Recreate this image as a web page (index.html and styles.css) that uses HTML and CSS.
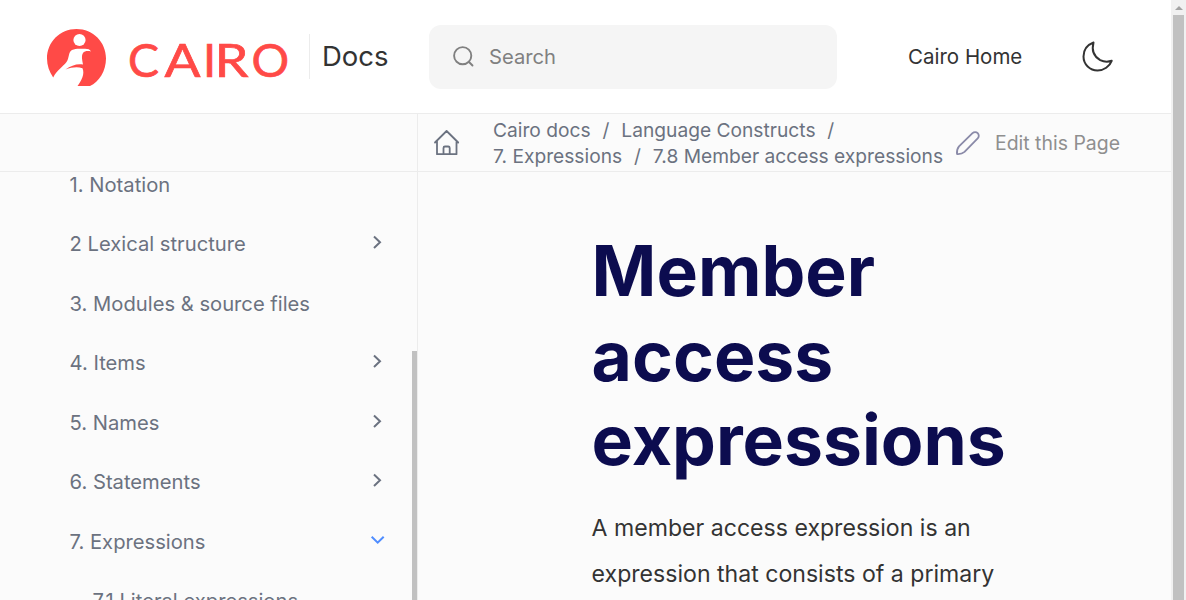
FILE: index.html
```html
<!DOCTYPE html>
<html lang="en">
<head>
<meta charset="utf-8">
<title>7.8 Member access expressions - Cairo Docs</title>
<link rel="stylesheet" href="styles.css">
</head>
<body>
<div class="page">
  <header class="header">
    <a class="brand">
      <svg class="logo" width="244" height="60" viewBox="0 0 244 60" role="img" aria-label="Cairo">
        <path fill="#ff4a47" d="M30.500 1C14 1 1 14 1 30.500c0 7 2.300 13 6.200 19C11 42 17 38.500 20.500 34c3-4 1.500-9.500 5.500-12 4-2 9-1 13-1.300 3 0 5 .7 6 2.800-3-.8-6.500-.5-8 1.500-2 3-.5 8 0 11.500-6-1-12 1-17.500 5 6-2.200 12-2.800 17-1.300 2.500 6-1 12.300-5 17.800H44C53 54 60 43 60 30.500 60 14 47 1 30.500 1Z"/>
        <circle cx="33.500" cy="12" r="6.100" fill="#fff"/>
        <text class="wordmark" x="82" y="48.500" textLength="31" lengthAdjust="spacingAndGlyphs">C</text>
        <text class="wordmark" x="118.500" y="48.500" textLength="36" lengthAdjust="spacingAndGlyphs">A</text>
        <text class="wordmark" x="157" y="48.500">I</text>
        <text class="wordmark" x="168.500" y="48.500" textLength="34" lengthAdjust="spacingAndGlyphs">R</text>
        <text class="wordmark" x="205.500" y="48.500">O</text>
      </svg>
      <span class="product">Docs</span>
    </a>
    <div class="search">
      <svg width="24" height="24" viewBox="0 0 24 24" fill="none" stroke="#808080" stroke-width="1.900" stroke-linecap="round"><circle cx="10.700" cy="10.700" r="8.600"/><path d="m17 17 3.500 3.500"/></svg>
      <span>Search</span>
    </div>
    <a class="home-link">Cairo Home</a>
    <svg class="moon" width="32" height="32" viewBox="0 0 32 32" fill="none" stroke="#333" stroke-width="2" stroke-linejoin="round"><path d="M11.500 1.500C5 4 1.500 9.500 1.500 15.500c0 8 6.500 14 14 14 6.500 0 12-4 14.200-9.700-3.500 1.200-8 1-11.500-.7C12 15.500 9.500 9 11.500 1.500Z"/></svg>
  </header>
  <div class="toolbar">
    <div class="toolbar-side"></div>
    <svg class="house" width="28" height="28" viewBox="0 0 28 28" fill="none" stroke="#6b7280" stroke-width="1.800" stroke-linecap="round" stroke-linejoin="round"><path d="M2 13.500 13.600 2l11.600 11.500M4 12v13.200h19.500V12M10.500 25v-6q0-1.500 1.500-1.500h3.200q1.500 0 1.500 1.500v6"/></svg>
    <nav class="crumbs">
      <div><a>Cairo docs</a><i>/</i><a>Language Constructs</a><i>/</i></div>
      <div><a>7. Expressions</a><i>/</i><a>7.8 Member access expressions</a></div>
    </nav>
    <a class="edit">
      <svg width="26" height="26" viewBox="0 0 26 26" fill="none" stroke="#8a8aa8" stroke-width="1.800" stroke-linejoin="round"><path d="M2 24c-.3-3 0-5.300 2-7.700L17.500 3.200c1.500-1.400 3.800-1.400 5.200 0s1.500 3.700 0 5.200L9.500 21.800C7.300 23.800 5 24.200 2 24Z"/></svg>
      <span>Edit this Page</span>
    </a>
  </div>
  <div class="body">
    <aside class="sidebar">
      <ul class="nav">
        <li>1. Notation</li>
        <li>2 Lexical structure<svg class="chev" viewBox="0 0 16 16"><path d="m4 2.500 6 5.700-6 5.700"/></svg></li>
        <li>3. Modules &amp; source files</li>
        <li>4. Items<svg class="chev" viewBox="0 0 16 16"><path d="m4 2.500 6 5.700-6 5.700"/></svg></li>
        <li>5. Names<svg class="chev" viewBox="0 0 16 16"><path d="m4 2.500 6 5.700-6 5.700"/></svg></li>
        <li>6. Statements<svg class="chev" viewBox="0 0 16 16"><path d="m4 2.500 6 5.700-6 5.700"/></svg></li>
        <li>7. Expressions<svg class="chev open" viewBox="0 0 16 16"><path d="m1.700 4.700 6 6 6-6"/></svg></li>
        <li class="child">7.1 Literal expressions</li>
      </ul>
      <div class="side-scroll"></div>
    </aside>
    <main class="article">
      <h1>Member access expressions</h1>
      <p>A member access expression is an expression that consists of a primary</p>
    </main>
  </div>
</div>
<div class="scrollbar"><div class="arrow"></div><div class="thumb"></div></div>
</body>
</html>
```
FILE: styles.css
```css
* { box-sizing: border-box; }
body {
  margin: 0;
  height: 600px;
  display: flex;
  overflow: hidden;
  background: #fbfbfb;
  color: #333;
  font-family: Inter, sans-serif;
}
.page { width: 1171px; height: 600px; display: flex; flex-direction: column; overflow: hidden; }
.header {
  height: 114px;
  flex: none;
  display: flex;
  align-items: center;
  padding: 0 57px 0 46px;
  background: #fff;
  border-bottom: 1px solid #ececec;
}
.brand { display: flex; align-items: center; width: 383px; }
.logo { flex: none; width: 244px; height: 60px; margin-top: 3px; clip-path: inset(0 0 2px 0); }
.wordmark { font-family: Lato, sans-serif; font-size: 47px; fill: #ff4a47; stroke: #ff4a47; stroke-width: 0.7; }
.product {
  margin-left: 19px;
  padding-left: 12px;
  height: 45px;
  line-height: 44px;
  border-left: 1px solid #ececec;
  font-size: 27.5px;
  white-space: nowrap;
}
.search {
  width: 408px;
  height: 64px;
  display: flex;
  align-items: center;
  gap: 13px;
  padding-left: 23px;
  border-radius: 12px;
  background: #f5f5f5;
  color: #808080;
  font-size: 20.2px;
}
.home-link { margin-left: 71px; font-size: 20.5px; white-space: nowrap; }
.moon { margin-left: auto; }
.toolbar {
  height: 58px;
  flex: none;
  display: flex;
  align-items: center;
  border-bottom: 1px solid #ececec;
}
.toolbar-side { width: 418px; height: 58px; border-right: 1px solid #ececec; }
.house { margin-left: 15px; }
.crumbs { margin: 1px 0 0 32px; width: 462px; color: #6b7280; font-size: 19.2px; line-height: 26px; white-space: nowrap; }
.crumbs i { font-style: normal; padding: 0 12px 0 11.8px; }
.edit { display: flex; align-items: center; gap: 14px; margin-top: 1px; color: #8f8f8f; font-size: 19.45px; white-space: nowrap; }
.body { flex: 1; min-height: 0; display: flex; overflow: hidden; }
.sidebar { width: 418px; display: flex; justify-content: space-between; border-right: 1px solid #ececec; overflow: hidden; }
.nav { list-style: none; margin: -17.4px 0 0; padding: 0 0 0 69.6px; width: 386px; flex: none; }
.nav li {
  height: 59.5px;
  display: flex;
  align-items: center;
  justify-content: space-between;
  color: #6b7280;
  font-size: 20.2px;
  white-space: nowrap;
}
.nav .child { padding-left: 23px; }
.chev { width: 16px; height: 16px; margin-top: -3.5px; fill: none; stroke: #6b7280; stroke-width: 2; }
.chev.open { stroke: #4f8dff; }
.side-scroll { width: 5px; height: 249px; margin-top: 179px; background: #c1c1c1; }
.article { width: 450px; margin-left: 173.6px; }
h1 {
  margin: 57px 0 0;
  color: #0c0c4f;
  font-size: 69.6px;
  line-height: 84.5px;
  font-weight: 700;
}
p { margin: 22px 0 0; font-size: 23.1px; line-height: 46px; }
.scrollbar { width: 15px; height: 600px; padding: 0 2px; background: #f1f1f1; }
.arrow { height: 15px; padding: 6px 1.5px 0; }
.arrow::before { content: ""; display: block; border: 4px solid transparent; border-top: 0; border-bottom-color: #a3a3a3; width: 0; }
.thumb { height: 585px; background: #c1c1c1; }
```
